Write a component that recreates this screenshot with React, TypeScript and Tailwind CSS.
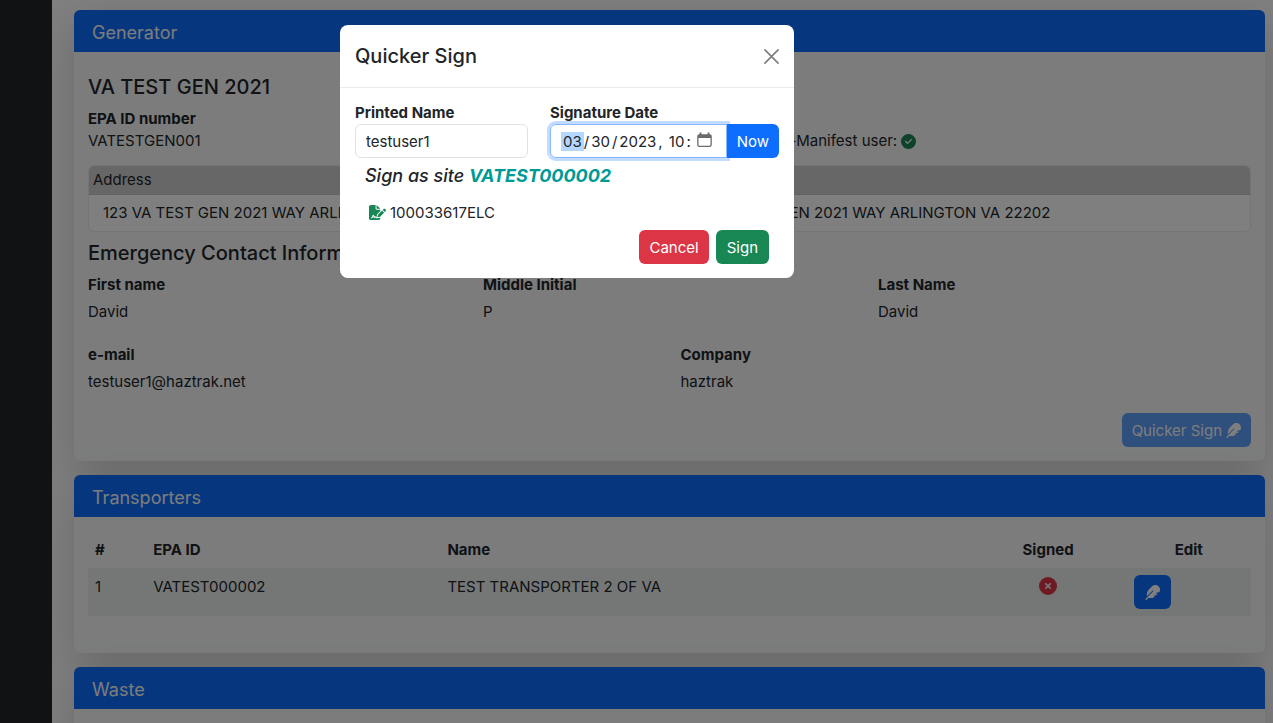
import type { ReactNode } from 'react';
import { FaFeather, FaFileSignature, FaCircleCheck, FaCircleXmark } from 'react-icons/fa6';

function Card({ title, children }: { title: string; children?: ReactNode }) {
  return (
    <section className="relative rounded-md bg-[#f8f9fa] shadow-[0_15px_45px_rgba(0,0,0,0.175)]">
      <h2 className="rounded-t-md bg-[#0d6efd] px-[18px] pt-2 pb-1 text-lg leading-[30px] text-[#f8f9fa]">{title}</h2>
      {children}
    </section>
  );
}

function Detail({ label, value }: { label: string; value: string }) {
  return (
    <div>
      <dt className="font-bold">{label}</dt>
      <dd className="mt-1">{value}</dd>
    </div>
  );
}

function GeneratorCard() {
  return (
    <Card title="Generator">
      <div className="flex flex-col px-3.5 pt-[19px] pb-3.5">
        <h3 className="text-xl leading-8 font-medium">VA TEST GEN 2021</h3>
        <div className="mt-[5px] grid grid-cols-2 items-end gap-x-[22px] leading-[22px]">
          <div>
            <p className="font-bold">EPA ID number</p>
            <p>VATESTGEN001</p>
          </div>
          <p className="flex items-center gap-1 pl-1">
            Is Registered e-Manifest user: <FaCircleCheck className="text-[#198754]" />
          </p>
        </div>
        <div className="mt-[13px] overflow-hidden rounded-md border border-[#eaebec] bg-white">
          <p className="border-b border-[#c4c4c4] bg-[#cfcfcf] px-1 leading-7">Address</p>
          <div className="grid grid-cols-2 leading-9">
            <p className="px-3.5">123 VA TEST GEN 2021 WAY ARLINGTON VA 22202</p>
            <p className="px-3.5">123 VA TEST GEN 2021 WAY ARLINGTON VA 22202</p>
          </div>
        </div>
        <h3 className="mt-[5px] text-xl leading-8 font-medium">Emergency Contact Information</h3>
        <dl className="mt-1 grid grid-cols-3 gap-x-[22px]">
          <Detail label="First name" value="David" />
          <Detail label="Middle Initial" value="P" />
          <Detail label="Last Name" value="David" />
        </dl>
        <dl className="mt-5 grid grid-cols-2 gap-x-[22px]">
          <Detail label="e-mail" value="testuser1@haztrak.net" />
          <Detail label="Company" value="haztrak" />
        </dl>
        <button
          type="button"
          disabled
          className="mt-5 flex h-[34px] items-center gap-1 self-end rounded-md bg-[#0d6efd] px-2.5 text-white opacity-65"
        >
          Quicker Sign <FaFeather />
        </button>
      </div>
    </Card>
  );
}

function TransportersCard() {
  return (
    <Card title="Transporters">
      <div className="px-3.5 pt-3.5 pb-[37px]">
        <table className="w-full table-fixed text-left">
          <colgroup>
            <col className="w-[5%]" />
            <col className="w-[25.3%]" />
            <col />
            <col className="w-[13.5%]" />
            <col className="w-[10.7%]" />
          </colgroup>
          <thead>
            <tr className="h-[37px]">
              <th className="px-[7px]">#</th>
              <th className="px-[7px]">EPA ID</th>
              <th className="px-[7px]">Name</th>
              <th className="px-[7px] text-center">Signed</th>
              <th className="px-[7px] text-center">Edit</th>
            </tr>
          </thead>
          <tbody>
            <tr className="h-12 bg-[#ebeded] align-top">
              <td className="p-[7px]">1</td>
              <td className="p-[7px]">VATEST000002</td>
              <td className="p-[7px]">TEST TRANSPORTER 2 OF VA</td>
              <td className="p-[7px]">
                <FaCircleXmark className="mx-auto mt-0.5 text-lg text-[#dc3545]" />
              </td>
              <td className="p-[7px]">
                <button
                  type="button"
                  aria-label="Sign"
                  className="flex h-[34px] w-[37px] items-center justify-center rounded-md bg-[#0d6efd] text-white"
                >
                  <FaFeather />
                </button>
              </td>
            </tr>
          </tbody>
        </table>
      </div>
    </Card>
  );
}

function CalendarIcon() {
  return (
    <svg viewBox="0 0 15 16" className="pointer-events-none absolute top-2 right-[15px] h-4 w-[15px] text-[#6b6b6e]" fill="currentColor">
      <path
        fillRule="evenodd"
        d="M2.600 .5h1.800v1.700h6.200V.5h1.800v1.700A2.200 2.200 0 0 1 14.800 4.400v8.400a2.200 2.200 0 0 1-2.200 2.200H2.400A2.200 2.200 0 0 1 .2 12.800V4.400A2.200 2.200 0 0 1 2.600 2.200ZM1.500 5.900v6.800a1 1 0 0 0 1 1h10a1 1 0 0 0 1-1V5.900Z"
      />
    </svg>
  );
}

function QuickerSignDialog() {
  return (
    <div className="fixed inset-0 flex items-start justify-center overflow-hidden bg-black/50 pt-[25px] pr-[139px]">
      <div role="dialog" aria-labelledby="dialog-title" className="w-[454px] rounded-lg bg-white">
        <header className="flex items-center justify-between border-b border-[#e9ecef] px-[15px] py-[15px]">
          <h2 id="dialog-title" className="text-xl leading-8 font-medium">
            Quicker Sign
          </h2>
          <button type="button" aria-label="Close" className="text-[#7f7f7f]">
            <svg viewBox="0 0 16 16" className="size-[15px]" fill="none" stroke="currentColor" strokeWidth="1.8" strokeLinecap="round">
              <path d="M1 1 15 15M15 1 1 15" />
            </svg>
          </button>
        </header>
        <form className="px-[15px] py-3.5">
          <div className="flex gap-[22px]">
            <div className="w-[173px]">
              <label htmlFor="printed-name" className="block leading-[22px] font-bold">
                Printed Name
              </label>
              <input
                id="printed-name"
                type="text"
                defaultValue="testuser1"
                className="block h-[34px] w-full rounded-md border border-[#dee2e6] px-2.5 outline-none"
              />
            </div>
            <div className="min-w-0 flex-1">
              <label htmlFor="signature-date" className="block leading-[22px] font-bold">
                Signature Date
              </label>
              <div className="flex h-[34px]">
                <div className="relative min-w-0 flex-1">
                  <input
                    id="signature-date"
                    type="datetime-local"
                    defaultValue="2023-03-30T10:15"
                    className="h-full w-full rounded-l-md border border-[#86b7fe] pr-3.5 pl-2.5 shadow-[0_0_0_3px_#c2dbfe] outline-none [&::-webkit-calendar-picker-indicator]:opacity-0 [&::-webkit-datetime-edit]:overflow-hidden [&::-webkit-datetime-edit-day-field]:px-0.5 [&::-webkit-datetime-edit-hour-field]:px-0.5 [&::-webkit-datetime-edit-minute-field]:pl-1.5 [&::-webkit-datetime-edit-month-field]:rounded-none [&::-webkit-datetime-edit-month-field]:bg-[#b3d7ff] [&::-webkit-datetime-edit-month-field]:px-0.5 [&::-webkit-datetime-edit-year-field]:px-0.5"
                  />
                  <CalendarIcon />
                </div>
                <button type="button" className="relative rounded-r-md bg-[#0d6efd] px-2.5 text-white">
                  Now
                </button>
              </div>
            </div>
          </div>
          <p className="mt-1 px-2.5 text-lg leading-7 font-medium italic">
            Sign as site <strong className="font-bold text-[#009a96]">VATEST000002</strong>
          </p>
          <p className="mt-[11px] flex items-center gap-1 px-3.5">
            <FaFileSignature className="text-[17px] text-[#198754]" />
            100033617ELC
          </p>
          <div className="mt-1.5 flex justify-end gap-[7px] pr-2.5">
            <button type="button" className="h-[34px] rounded-md bg-[#dc3545] px-2.5 text-white">
              Cancel
            </button>
            <button type="submit" className="h-[34px] rounded-md bg-[#198754] px-[11px] text-white">
              Sign
            </button>
          </div>
        </form>
      </div>
    </div>
  );
}

export default function App() {
  return (
    <div className="flex h-screen overflow-hidden bg-white font-['Inter','Liberation_Sans',sans-serif] text-[15px] leading-[23px] text-[#212529]">
      <aside className="w-[52px] shrink-0 bg-[#212529]" />
      <main className="flex min-w-0 flex-1 flex-col gap-3.5 overflow-hidden pt-2.5 pr-2 pl-[22px]">
        <GeneratorCard />
        <TransportersCard />
        <Card title="Waste">
          <div className="h-24" />
        </Card>
      </main>
      <QuickerSignDialog />
    </div>
  );
}
